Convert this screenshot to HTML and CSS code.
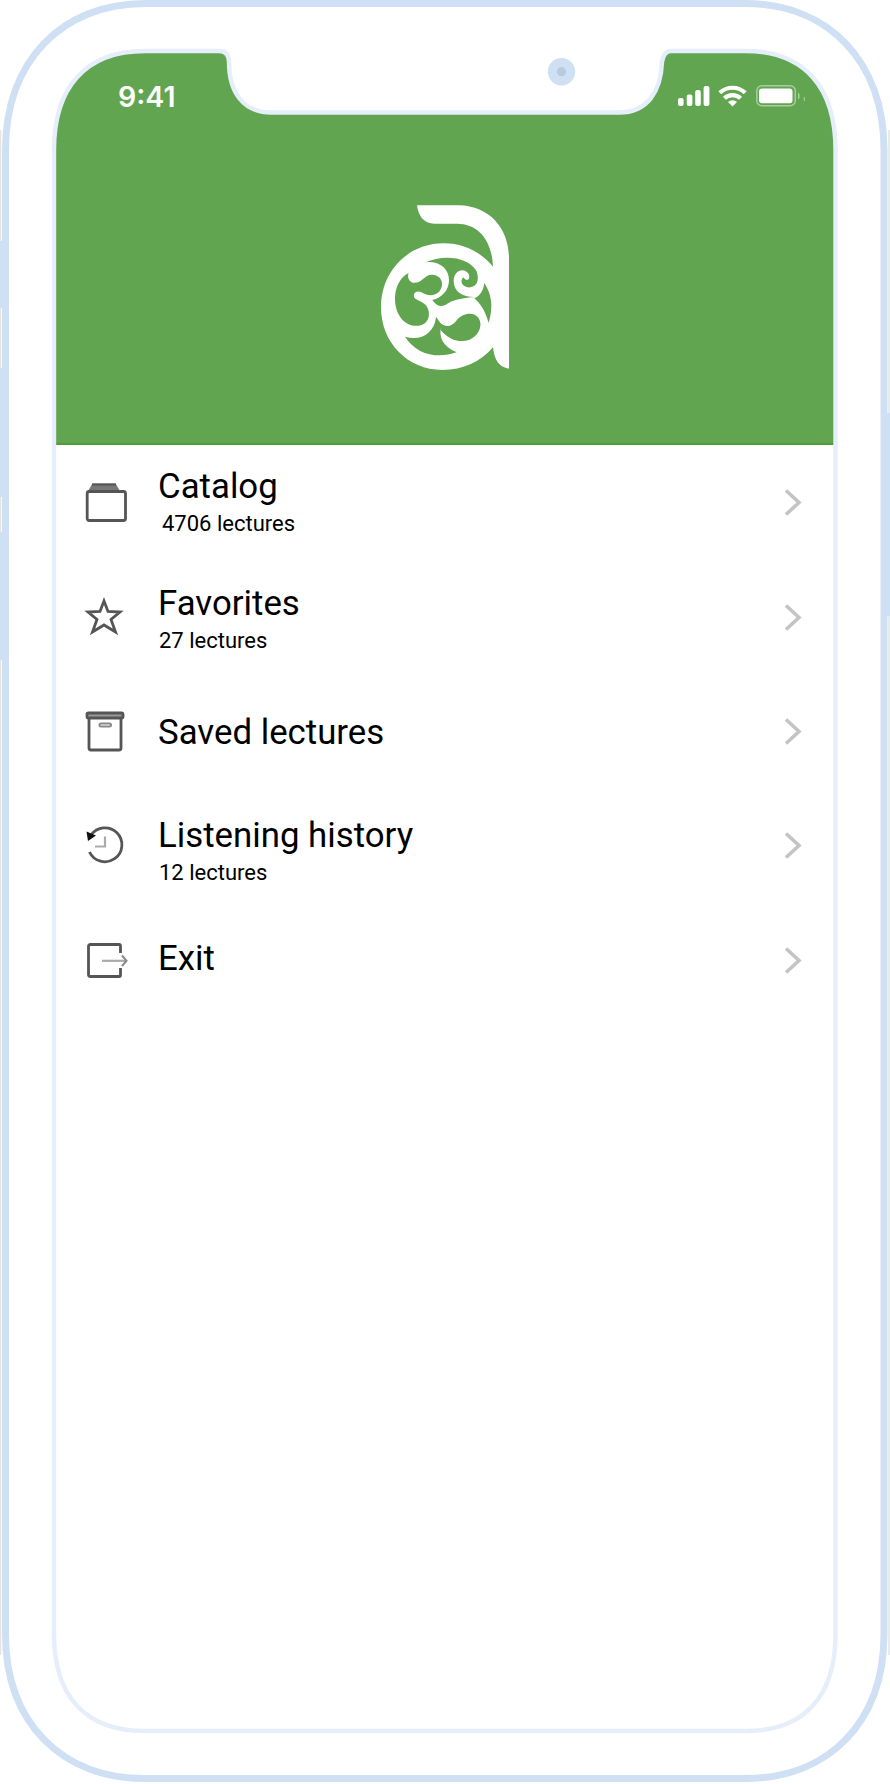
FILE: index.html
```html
<!DOCTYPE html>
<html lang="en">
<head>
    <meta charset="UTF-8">
    <meta name="viewport" content="width=device-width, initial-scale=1.0">
    <title>Lectures</title>
    <link rel="stylesheet" href="styles.css">
</head>
<body>
    <div class="phone">
        <div class="screen">
            <header class="header">
                <div class="status-bar">
                    <span class="time">9:41</span>
                    <svg class="status-icons" width="128" height="22" viewBox="0 0 128 22">
                        <g fill="#fff">
                            <rect x="0" y="13" width="5.6" height="8" rx="2"/>
                            <rect x="8.8" y="9.5" width="5.6" height="11.5" rx="2"/>
                            <rect x="17.2" y="5" width="5.6" height="16" rx="2"/>
                            <rect x="25.6" y="1" width="5.8" height="20" rx="2"/>
                        </g>
                        <g fill="none" stroke="#fff" stroke-width="4.2">
                            <path d="M41.8 7.8a18.5 18.5 0 0 1 25.4 0"/>
                            <path d="M46.4 13.2a12 12 0 0 1 16.2 0"/>
                        </g>
                        <path d="M50 17a6.4 6.4 0 0 1 9 0L54.5 21.5z" fill="#fff"/>
                        <rect x="78.8" y="0.8" width="38.5" height="20" rx="5" fill="none" stroke="#fff" stroke-opacity=".45" stroke-width="1.5"/>
                        <rect x="81" y="3.4" width="33.5" height="14.8" rx="3" fill="#fff"/>
                        <path d="M120 7.5c2.2 1 2.2 6 0 7z" fill="#fff" fill-opacity=".45"/>
                        <path d="M126.3 12v4" stroke="#fff" stroke-opacity=".5"/>
                    </svg>
                </div>
                <svg class="logo" width="170" height="190" viewBox="-1 0 510 570">
                    <path fill="#fff" d="M170 46H295C390 48 446 118 446 205V536C416 532 402 510 398 472C362 515 308 540 246 540C142 540 62 458 62 352C62 245 142 160 250 160C308 160 360 184 398 230C395 148 352 101 290 101H222C190 101 174 78 170 46Z"/>
                    <g fill="#62a550">
                        <path d="M195 217C250 192 325 200 349 244C360 278 344 295 321 292C304 288 298 272 309 262C321 278 331 266 325 252C313 232 281 238 280 273C280 306 308 322 345 321C312 323 275 329 255 345C240 352 229 348 216 330C244 323 266 302 266 270C266 236 236 212 195 217Z"/>
                        <path d="M145 249C102 270 94 335 116 375C130 402 158 413 184 405C207 397 211 370 200 350C190 336 176 334 163 325C156 311 166 300 182 306C202 320 239 322 245 286C249 260 219 247 200 258C184 269 178 280 158 278C146 275 140 262 145 249Z"/>
                        <path d="M134 440C180 453 222 432 227 380L244 405C232 440 248 470 289 487C232 507 169 495 134 440Z"/>
                        <path d="M236 395C257 416 274 409 288 392C304 372 336 363 353 382C370 405 356 437 328 449C295 461 263 447 241 420Z"/>
                        <path d="M372 279C395 314 399 352 385 399C374 361 360 340 342 325C360 317 369 302 372 279Z"/>
                    </g>
                </svg>
            </header>
            <nav class="menu">
                <a class="item catalog">
                    <svg class="icon" width="48" height="56" viewBox="0 0 48 56">
                        <path d="M9.5 9.5H32.5L37 17H5z" fill="#777" stroke="none"/>
                        <path d="M9 10.5H33" stroke-width="2"/>
                        <rect x="4.2" y="17.5" width="38.3" height="29" rx="2"/>
                    </svg>
                    <span class="label">
                        <span class="title">Catalog</span>
                        <span class="count">4706 lectures</span>
                    </span>
                    <svg class="chevron" width="17" height="28" viewBox="0 0 17 28"><path d="M1 2.5L14 14.5L1 26.5"/></svg>
                </a>
                <a class="item favorites">
                    <svg class="icon" width="48" height="56" viewBox="0 0 48 56">
                        <path d="M21 12L25 22.5L37 23L28 30.5L32.5 43L21 36L9.5 43L14 30.5L5 23L17 22.5Z"/>
                    </svg>
                    <span class="label">
                        <span class="title">Favorites</span>
                        <span class="count">27 lectures</span>
                    </span>
                    <svg class="chevron" width="17" height="28" viewBox="0 0 17 28"><path d="M1 2.5L14 14.5L1 26.5"/></svg>
                </a>
                <a class="item saved">
                    <svg class="icon" width="48" height="56" viewBox="0 0 48 56">
                        <rect x="4" y="10" width="36" height="5" rx="1.5" fill="#999"/>
                        <path d="M6 15V45Q6 47 8 47H36Q38 47 38 45V15"/>
                        <rect x="16.5" y="20.5" width="11.5" height="3" rx="1.5" class="soft"/>
                    </svg>
                    <span class="label">
                        <span class="title">Saved lectures</span>
                    </span>
                    <svg class="chevron" width="17" height="28" viewBox="0 0 17 28"><path d="M1 2.5L14 14.5L1 26.5"/></svg>
                </a>
                <a class="item history">
                    <svg class="icon" width="48" height="56" viewBox="0 0 48 56">
                        <path d="M8 18A17 17 0 1 1 6.500 35"/>
                        <path d="M3.5 14.5L13 18.5L5 24z" fill="#111" stroke="none"/>
                        <path d="M22 19.5V29.5H12" class="faint"/>
                    </svg>
                    <span class="label">
                        <span class="title">Listening history</span>
                        <span class="count">12 lectures</span>
                    </span>
                    <svg class="chevron" width="17" height="28" viewBox="0 0 17 28"><path d="M1 2.5L14 14.5L1 26.5"/></svg>
                </a>
                <a class="item exit">
                    <svg class="icon" width="48" height="56" viewBox="0 0 48 56">
                        <path d="M37.5 21V14Q37.5 12.5 36 12.5H7.5Q5.5 12.5 5.5 14.5V42.5Q5.5 44.5 7.5 44.5H36Q37.5 44.5 37.5 43V36"/>
                        <path d="M19 28.8H43" class="faint"/>
                        <path d="M39 23.5L43.5 28.8L39 34" class="soft"/>
                    </svg>
                    <span class="label">
                        <span class="title">Exit</span>
                    </span>
                    <svg class="chevron" width="17" height="28" viewBox="0 0 17 28"><path d="M1 2.5L14 14.5L1 26.5"/></svg>
                </a>
            </nav>
        </div>
        <!-- phone body, drawn over the screen so it cuts the corners and the notch -->
        <svg class="frame" width="890" height="1784" viewBox="0 0 890 1784">
            <path fill="#fff" fill-rule="evenodd" d="M0 0H890V1784H0ZM54 150C54 88 85 51 145 51H219C227 51 229 56 229 62C229 92 243 112.5 271 112.5H619C647 112.5 661 92 662 62C663 56 665 51 671 51H745C805 51 835.5 88 835.5 150V1634C835.5 1696 805 1731 745 1731H145C85 1731 54 1696 54 1634Z"/>
            <path class="inner-line" d="M54 150C54 88 85 51 145 51H219C227 51 229 56 229 62C229 92 243 112.5 271 112.5H619C647 112.5 661 92 662 62C663 56 665 51 671 51H745C805 51 835.5 88 835.5 150V1634C835.5 1696 805 1731 745 1731H145C85 1731 54 1696 54 1634Z"/>
            <path class="edge" d="M.5 130V1655M889 130V1655"/>
            <path class="outer-line" d="M5.5 150C5.5 61 62 3.5 145 3.5H745C828 3.5 884 61 884 150V1634C884 1723 828 1778.5 745 1778.5H145C62 1778.5 5.5 1723 5.5 1634Z"/>
            <path fill="#cfe0f5" d="M0 241h3v67H0zM0 368h3v129H0zM0 532h3v128H0zM887 413h3v203h-3z"/>
            <circle cx="561.5" cy="71.7" r="13.7" fill="#cfe0f5"/>
            <circle cx="561.5" cy="71.7" r="4.6" fill="#b9cae0"/>
        </svg>
    </div>
</body>
</html>
```
FILE: styles.css
```css
body {
    margin: 0;
    background-color: #fff;
    font-family: Roboto, Arial, sans-serif;
    color: #000;
}
.phone {
    position: relative;
    box-sizing: border-box;
    width: 890px;
    height: 1784px;
    padding: 51px 54px;
    overflow: hidden;
}
.frame {
    position: absolute;
    top: 0;
    left: 0;
}
.inner-line {
    fill: none;
    stroke: #e5eefa;
    stroke-width: 4.4;
}
.outer-line {
    fill: none;
    stroke: #cfe0f5;
    stroke-width: 7;
}
.edge {
    stroke: #e3e3e0;
    stroke-width: 1.5;
}

/* green top */
.header {
    box-sizing: border-box;
    height: 394px;
    background-color: #62a550;
    border-bottom: 2px solid #4e9c3c;
}
.status-bar {
    display: flex;
    justify-content: space-between;
    align-items: flex-start;
    box-sizing: border-box;
    height: 139px;
    padding: 34px 30px 0 64px;
}
.time {
    font-family: Inter, sans-serif;
    font-size: 28.5px;
    font-weight: 600;
    line-height: 23px;
    color: #fff;
}
.logo {
    display: block;
    margin: 0 auto;
}

/* menu */
.item {
    display: flex;
    align-items: center;
    box-sizing: border-box;
    height: 114.4px;
    padding: 0 34px 0 29px;
}
.icon {
    fill: none;
    stroke: #555;
    stroke-width: 2.8;
}
.icon .soft {
    stroke: #888;
    stroke-width: 2;
}
.icon .faint {
    stroke: #aaa;
    stroke-width: 2.2;
}
.label {
    flex: 1;
    align-self: flex-start;
    margin-left: 27px;
}
.title {
    display: block;
    font-size: 34.8px;
    line-height: 40px;
}
.count {
    display: block;
    margin: 5px 0 0 1px;
    font-size: 22px;
    line-height: 26px;
}
.catalog .label {
    padding-top: 21.4px;
}
.catalog .count {
    margin-left: 4px;
}
.favorites .label {
    padding-top: 23.6px;
}
.saved .label {
    padding-top: 38.2px;
}
.history .label {
    padding-top: 27.2px;
}
.exit .label {
    padding-top: 35.4px;
}
.chevron {
    fill: none;
    stroke: #c4c4c6;
    stroke-width: 3.6;
}
```
